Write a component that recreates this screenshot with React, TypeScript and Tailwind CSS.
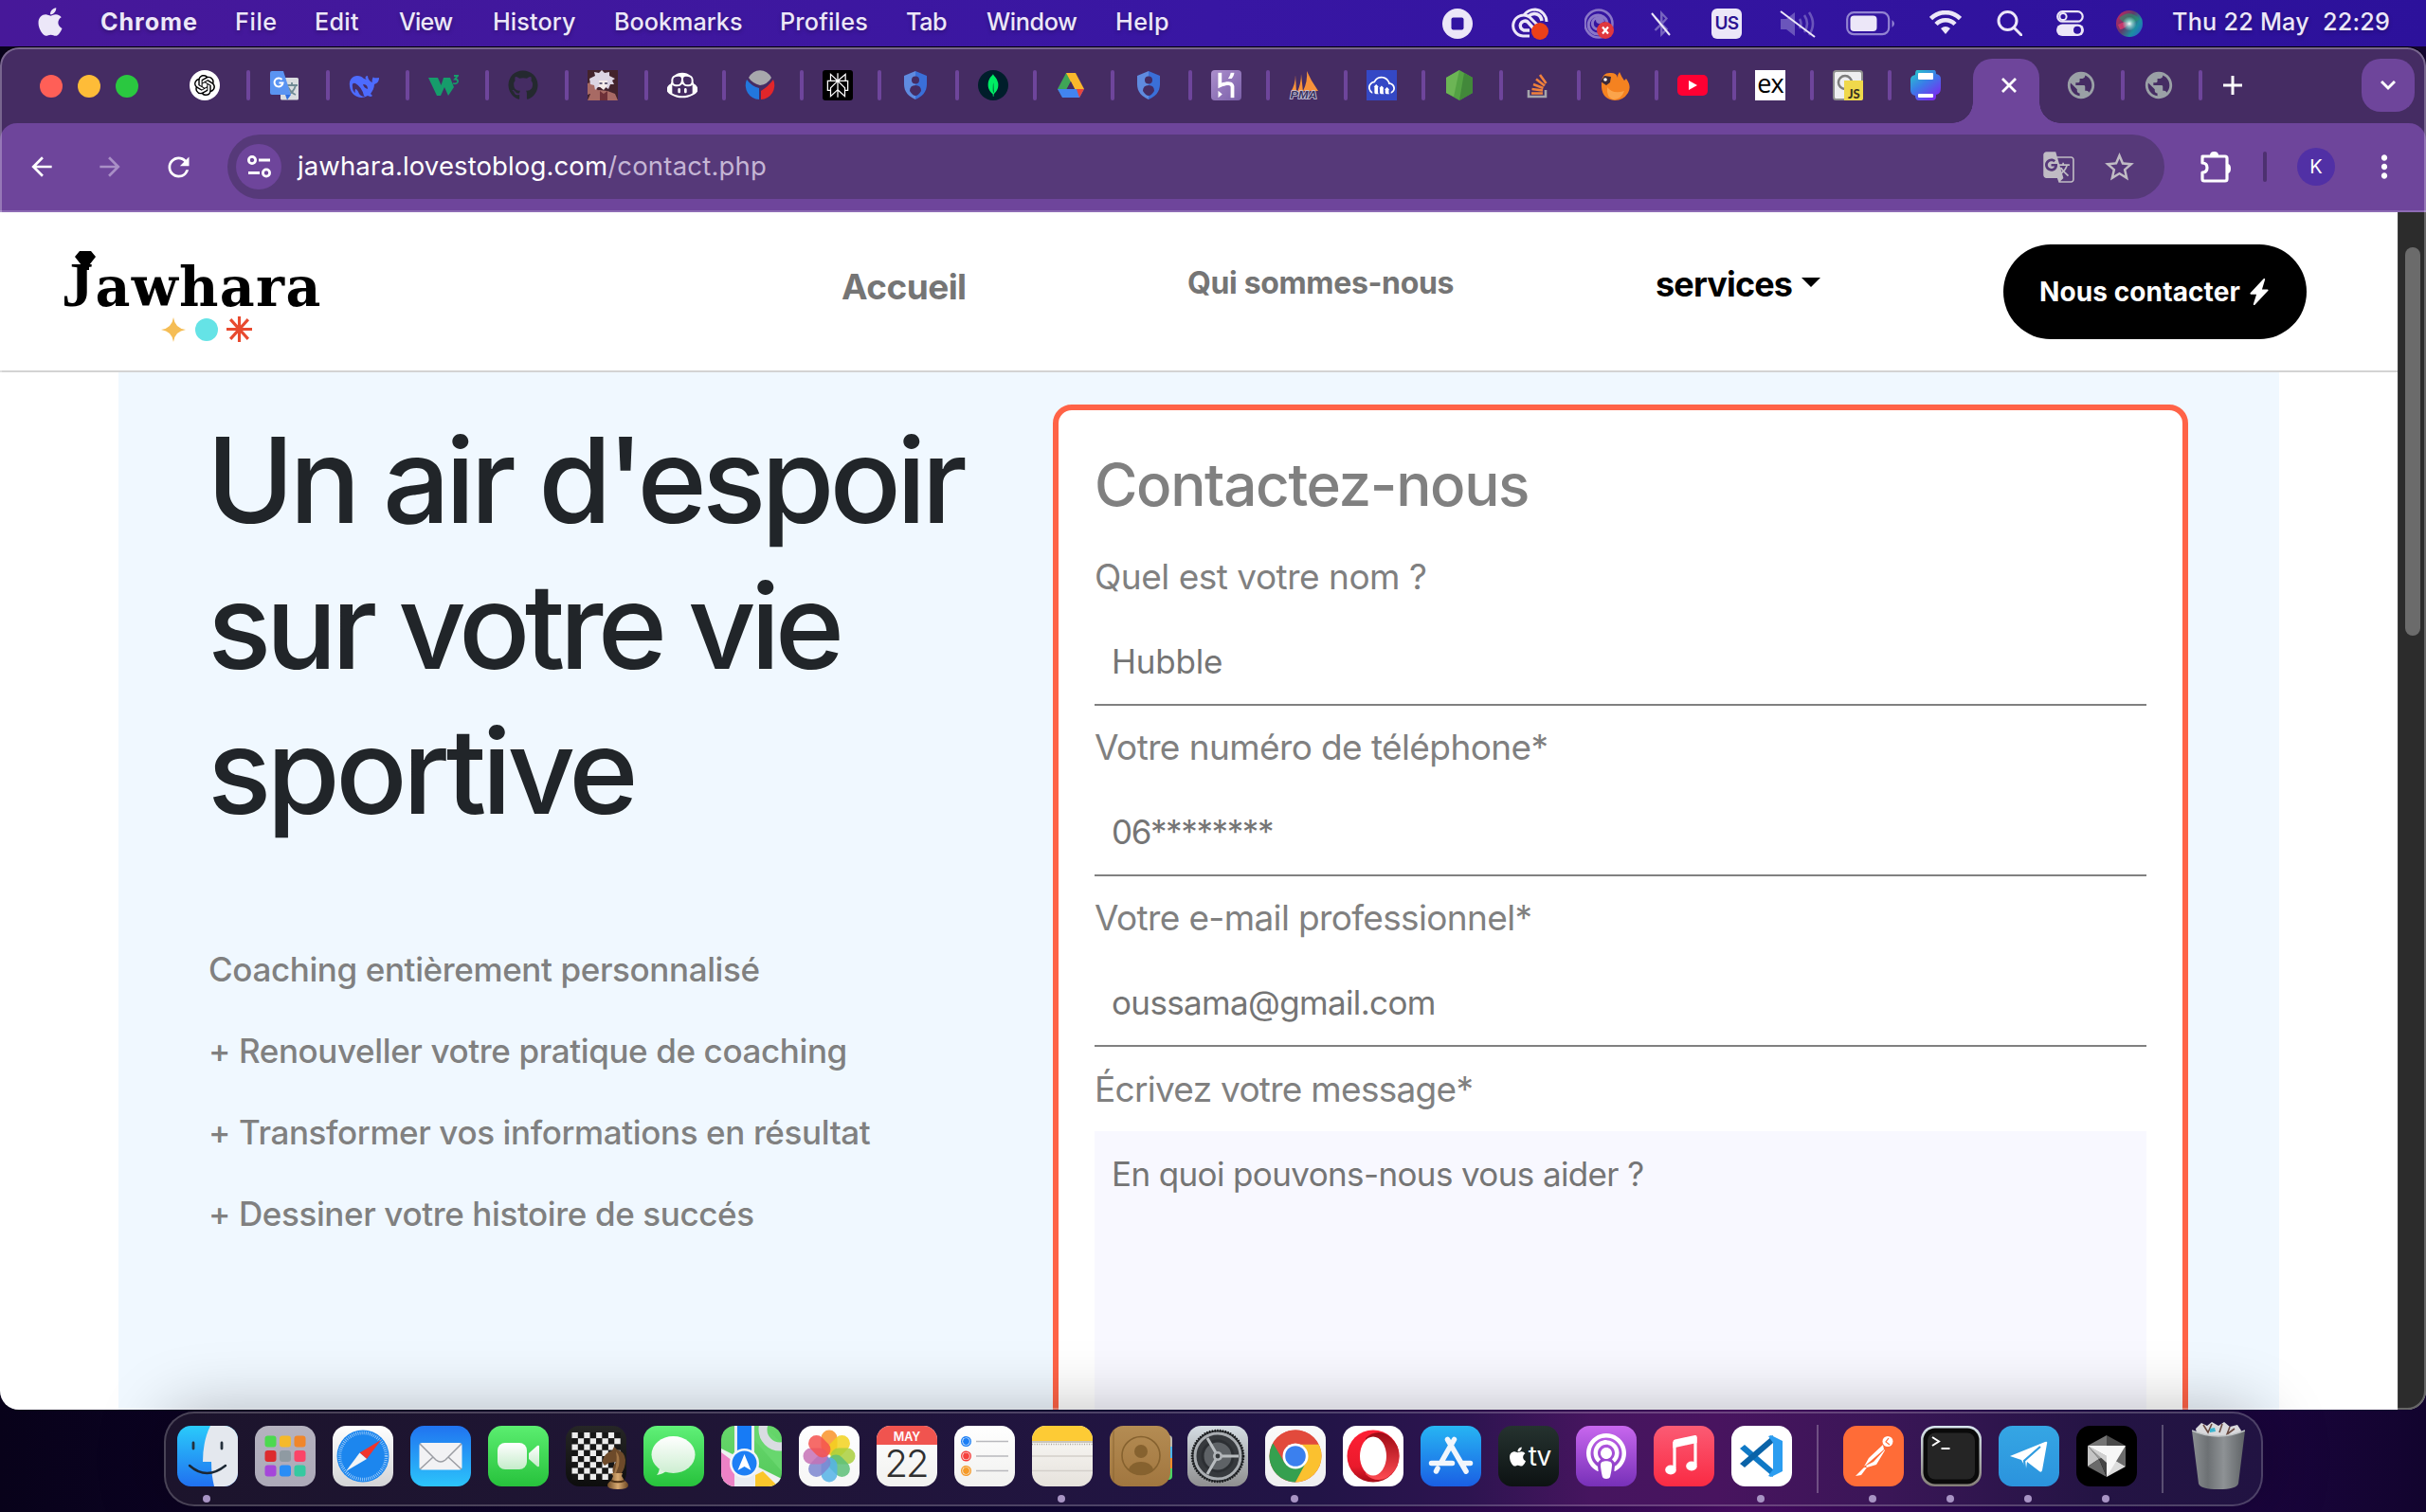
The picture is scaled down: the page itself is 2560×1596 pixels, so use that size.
import type { ReactNode } from 'react';
import { SiOpenai, SiPerplexity, SiMongodb, SiHeroku, SiGithubcopilot, SiCloudinary } from 'react-icons/si';
import { FaApple, FaGithub, FaPodcast, FaBluetoothB } from 'react-icons/fa';
import {
  MdArrowBack, MdArrowForward, MdRefresh, MdStarBorder, MdMoreVert, MdPublic, MdOutlineGTranslate,
} from 'react-icons/md';
import { BsLightningChargeFill } from 'react-icons/bs';

/* ---------- menu bar ---------- */

function MenuBar() {
  return (
    <header className="flex h-[49px] shrink-0 items-center bg-linear-to-r from-[#471899] via-[#3816a3] via-50% to-[#2c119b] text-[25.2px] font-medium leading-[46px] text-[#ece7f8]">
      <div className="flex h-[46px] items-center pb-[3px] [text-shadow:0_2px_4px_rgba(0,0,0,0.25)]">
        <div className="w-[106px] pl-[36px]">
          <FaApple className="size-[34px]" />
        </div>
        <span className="w-[142px] font-bold tracking-[0.9px]">Chrome</span>
        <span className="w-[84px] tracking-[0.6px]">File</span>
        <span className="w-[89px] tracking-[0.3px]">Edit</span>
        <span className="w-[99px] tracking-[-0.8px]">View</span>
        <span className="w-[128px] tracking-[0.1px]">History</span>
        <span className="w-[175px]">Bookmarks</span>
        <span className="w-[133px] tracking-[0.2px]">Profiles</span>
        <span className="w-[85px] tracking-[-0.4px]">Tab</span>
        <span className="w-[136px] tracking-[-0.4px]">Window</span>
        <span className="w-[345px] tracking-[0.4px]">Help</span>
      </div>
      <div className="flex h-[48px] items-center">
        <svg className="mr-[40px] size-[32px]" viewBox="0 0 32 32">
          <circle cx="16" cy="16" r="16" fill="#ece7f8" />
          <rect x="9.500" y="9.500" width="13" height="13" rx="2" fill="#3114a1" />
        </svg>
        <svg className="mr-[37px] h-[34px] w-[41px]" viewBox="0 0 41 34" fill="none">
          <path d="M14 8C17 4 21 2 26 2a13 13 0 0 1 12 13M20 30H13a11 11 0 1 1 7-20l8 8" stroke="#ece7f8" strokeWidth="3" />
          <path d="M20 24h-6a5 5 0 1 1 4-9l8 9M19 9c6-5 13-2 14 5" stroke="#ece7f8" strokeWidth="3.500" />
          <circle cx="31" cy="25" r="9" fill="#eb4019" />
        </svg>
        <svg className="mr-[38px] h-[34px] w-[32px]" viewBox="0 0 32 34" fill="none">
          <circle cx="15" cy="17" r="14.500" stroke="#8a76c8" strokeWidth="2.500" />
          <path d="M15 28a10 10 0 1 1 9-12M14 23a6 6 0 1 1 6-8" stroke="#8a76c8" strokeWidth="3" />
          <circle cx="16" cy="13" r="4" fill="#8a76c8" />
          <circle cx="22" cy="24" r="9" fill="#e0383e" />
          <path d="M19 20.500l6 7M25 20.500l-6 7" stroke="#fff" strokeWidth="2.200" />
        </svg>
        <div className="relative mr-[43px] w-[21px]">
          <FaBluetoothB className="mx-auto h-[28px] w-[20px] text-[#7765bf]" />
          <svg className="absolute -top-px left-0 h-[30px] w-[21px]" viewBox="0 0 21 30">
            <path d="M1 4L20 27" stroke="#ece7f8" strokeWidth="2" />
          </svg>
        </div>
        <div className="mr-[40px] flex h-[32px] w-[32px] items-center justify-center rounded-[6px] bg-[#ece7f8] text-[19px] font-semibold leading-none tracking-[-0.6px] text-[#2c1492]">
          US
        </div>
        <svg className="mr-[32px] h-[30px] w-[38px]" viewBox="0 0 38 30" fill="none">
          <path d="M1 10h6l9-7v25l-9-7H1z" fill="#6a55bb" />
          <path d="M21 10q3 5 0 10M26 6q6 9 0 18M31 3q8 12 0 24" stroke="#6a55bb" strokeWidth="2.600" />
          <path d="M1 2l36 27" stroke="#ece7f8" strokeWidth="2" />
        </svg>
        <svg className="mr-[36px] h-[26px] w-[52px]" viewBox="0 0 52 26" fill="none">
          <rect x="1.200" y="1.200" width="44" height="23" rx="7" stroke="#9384d2" strokeWidth="2.200" />
          <rect x="4.500" y="4.500" width="28" height="16.500" rx="4" fill="#ece7f8" />
          <path d="M48.500 9q5 4 0 8z" fill="#9384d2" />
        </svg>
        <svg className="mb-[3px] mr-[37px] h-[25px] w-[34px]" viewBox="0 0 34 25" fill="none" stroke="#ece7f8" strokeWidth="4.600">
          <path d="M1.500 8.500a22 22 0 0 1 31 0M7 14.500a14 14 0 0 1 20 0" />
          <path d="M17 25l-5-6q5-4 10 0z" fill="#ece7f8" stroke="none" />
        </svg>
        <svg className="mr-[36px] size-[27px]" viewBox="0 0 27 27" fill="none" stroke="#ece7f8" strokeWidth="3">
          <circle cx="11.500" cy="11" r="9.500" />
          <path d="M18 18l8 8" strokeLinecap="round" />
        </svg>
        <svg className="mr-[34px] h-[27px] w-[29px]" viewBox="0 0 29 27" fill="none">
          <rect x="1.200" y="1.200" width="26.500" height="10.500" rx="5.250" stroke="#ece7f8" strokeWidth="2.200" />
          <circle cx="7" cy="6.500" r="3.600" stroke="#ece7f8" strokeWidth="2" />
          <rect x="0" y="14.500" width="29" height="12.500" rx="6.250" fill="#ece7f8" />
          <circle cx="22" cy="20.700" r="4" fill="#2f139f" />
        </svg>
        <svg className="mr-[31px] size-[28px]" viewBox="0 0 28 28">
          <defs>
            <linearGradient id="siri" x1="0" y1="0.200" x2="1" y2="0.900">
              <stop offset="0" stopColor="#c02663" />
              <stop offset="0.400" stopColor="#5f3c6a" />
              <stop offset="0.700" stopColor="#1b8fa0" />
              <stop offset="1" stopColor="#2c5bd0" />
            </linearGradient>
            <radialGradient id="siriGlow">
              <stop offset="0" stopColor="#ffffff" />
              <stop offset="0.500" stopColor="#9ce8e0" stopOpacity="0.600" />
              <stop offset="1" stopColor="#9ce8e0" stopOpacity="0" />
            </radialGradient>
          </defs>
          <circle cx="14" cy="14" r="14" fill="url(#siri)" />
          <path d="M3 8Q14-2 25 9 18 14 14 14 8 14 3 8z" fill="#1fa06c" opacity="0.550" />
          <path d="M2 15q8-5 12-1-6 6-10 6z" fill="#e8386c" opacity="0.700" />
          <circle cx="14" cy="14" r="7.500" fill="url(#siriGlow)" />
        </svg>
        <span className="whitespace-pre pb-[4px] tracking-[0.24px] [text-shadow:0_2px_4px_rgba(0,0,0,0.25)]">Thu 22 May  22:29</span>
      </div>
    </header>
  );
}

/* ---------- favicons (32 x 32) ---------- */

const Shield = () => (
  <svg viewBox="0 0 32 32">
    <path d="M16 1L4 6v9c0 8 5 13 12 16z" fill="#5f8be0" />
    <path d="M16 1l12 5v9c0 8-5 13-12 16z" fill="#3a6fd8" />
    <circle cx="16" cy="10.500" r="4" fill="#452c63" />
    <path d="M10 22q0-6 6-6t6 6q-3 5-6 5t-6-5z" fill="#452c63" />
  </svg>
);

const FAVICONS: ReactNode[] = [
  <div className="flex size-8 items-center justify-center rounded-full bg-white">
    <SiOpenai className="size-[22px] text-black" />
  </div>,
  <svg viewBox="0 0 32 32">
    <rect x="12" y="8" width="19" height="23.500" rx="1.500" fill="#dadde0" />
    <path d="M18 16h12M24 13v3M28 16q-2 7-8 10M20 18q3 6 8 8" stroke="#6f8a94" strokeWidth="1.800" fill="none" />
    <path d="M17 26h6l-4 5.500z" fill="#2f6fe0" />
    <path d="M3 1h12l8 25H3a2 2 0 0 1-2-2V3a2 2 0 0 1 2-2z" fill="#5a94f2" />
    <path d="M13.500 10a4.500 4.500 0 1 0 1 3.500h-4" stroke="#fff" strokeWidth="2" fill="none" />
  </svg>,
  <svg viewBox="0 0 32 32">
    <path
      d="M1 17C0 10 4 6 9 6c3 0 5 1 7 3l3 1c-2-1-2-4 1-4 0 3 2 6 5 7-1-2 0-4 1-6 0 2 3 1 6 1 0 4-2 6-5 7 0 4-2 7-4 10l2 2c-2 2-4 0-5 0C12 32 2 27 1 17z"
      fill="#4d6bfe"
    />
    <path d="M4 18q-1-5 3-4 7 4 9 13l1 1q-4 0-6-3-2-5-4-5-1 2 0 4-3-2-3-6z" fill="#452c63" />
    <path d="M15 15q5 0 5 5-4-1-5-5z" fill="#452c63" />
  </svg>,
  <svg viewBox="0 0 32 32" fill="none">
    <path d="M0 8h10l3.500 8L16 8h7l4 10-6 9-4-9-4 9H9z" fill="#169c6b" />
    <path d="M27 6h4l-3 3.500q3.500 0 3 3-1 2.500-5 1.500" stroke="#169c6b" strokeWidth="1.800" />
  </svg>,
  <FaGithub className="size-8 text-[#24292f]" />,
  <svg viewBox="0 0 32 32">
    <rect width="32" height="32" fill="#43232c" />
    <path d="M0 14l6-2 5 10-11 4zM0 32l4-9 8-2 9 1 8 3 3 7z" fill="#a86a64" />
    <path d="M2 9l6-3-1-4 5 1 3-3 3 3 5-1 0 4 6 3-3 2 2 4-4 0-2 5-3-2-8 0-3 3-1-5-4-1z" fill="#dcd4e2" />
    <path d="M12 11l9 0 0 5-4 5-5-4z" fill="#f5ece9" />
    <path d="M12.500 14h3M18 14h3" stroke="#3c3757" strokeWidth="1.600" />
    <path d="M13 22l4 3 4-3 0 10h-8z" fill="#6e3038" />
  </svg>,
  <SiGithubcopilot className="size-8 text-white" />,
  <svg viewBox="0 0 32 32">
    <path d="M4 8A14 16 0 0 1 28 8q-4 7-12 8Q8 14 4 8z" fill="#a8a8ac" />
    <path d="M2 10q5 7 13 9v12A15 15 0 0 1 2 10z" fill="#2277dd" />
    <path d="M30 10a15 15 0 0 1-13 21v-9q8-5 13-12z" fill="#e2262a" />
  </svg>,
  <div className="flex size-8 items-center justify-center rounded-[3px] bg-black">
    <SiPerplexity className="size-[26px] text-white" />
  </div>,
  <Shield />,
  <div className="flex size-8 items-center justify-center rounded-full bg-[#001e2b]">
    <SiMongodb className="size-[24px] text-[#00ed64]" />
  </div>,
  <svg viewBox="0 0 32 32">
    <path d="M11 3h10L7 28 2 20z" fill="#3fa557" />
    <path d="M11 3h10l-5 9z" fill="#1f8a43" />
    <path d="M11 3h10l9 17H20z" fill="#f9b72c" />
    <path d="M2 20h28l-5 9H7z" fill="#4284f0" />
    <path d="M22 20h8l-5 9z" fill="#e8453c" />
    <path d="M16 12l4 8h-8z" fill="#452c63" />
  </svg>,
  <Shield />,
  <div className="flex size-8 items-center justify-center rounded-[4px] bg-linear-to-br from-[#ac8fcd] to-[#7a5fa8]">
    <SiHeroku className="size-[38px] shrink-0 text-white [clip-path:inset(14%)]" />
  </div>,
  <svg viewBox="0 0 32 32">
    <path d="M19 1l5 10 7 11H15q5-10 4-21zM7 5l1 18H2q5-8 5-18zM13 4l2 19H9q4-9 4-19z" fill="#f7923a" />
    <text x="1.500" y="30" fontFamily="Liberation Sans" fontWeight="700" fontStyle="italic" fontSize="11.500" textLength="28" lengthAdjust="spacingAndGlyphs" fill="#3a3560" stroke="#c9c5dc" strokeWidth="1.600" paintOrder="stroke">
      PMA
    </text>
  </svg>,
  <div className="flex size-8 items-center justify-center bg-[#3448c5]">
    <SiCloudinary className="size-[28px] text-white" />
  </div>,
  <svg viewBox="0 0 32 32">
    <path d="M16 0l14 8v16l-14 8L2 24V8z" fill="#54a244" />
    <path d="M16 0L2 8v16l8 4z" fill="#6cb555" />
    <path d="M21 3l9 5v16l-14 8z" fill="#42883a" />
  </svg>,
  <svg viewBox="0 0 32 32" fill="none">
    <path d="M7 21v7h18v-7" stroke="#a5a5ab" strokeWidth="2.600" />
    <path d="M10 24.500h12M10.500 20l11.500 1.500M12 15l10.500 4M15 9.500l9 7M19 5l6.500 9" stroke="#f0803c" strokeWidth="2.600" />
  </svg>,
  <svg viewBox="0 0 32 32">
    <path d="M2 12Q3 2 12 3q6 0 7 5 0-4 2-6 2 5 5 9l2-2q6 8 2 15-5 8-14 8Q3 31 2 18z" fill="#f58220" />
    <path d="M8 18q6 8 18 4-3 9-12 9-7-2-6-13z" fill="#fba44b" />
    <path d="M1 12l4-6 7 1-1 6-4 3z" fill="#3b2a3a" />
    <circle cx="6" cy="10" r="1.800" fill="#fff" />
  </svg>,
  <div className="flex h-[22px] w-8 items-center justify-center rounded-[5px] bg-[#ff0033]">
    <svg className="h-[10px] w-[9px]" viewBox="0 0 9 10">
      <path d="M0 0l9 5-9 5z" fill="#fff" />
    </svg>
  </div>,
  <div className="flex size-8 items-center justify-center bg-white font-['Open_Sans'] text-[27px] leading-none tracking-[-1px] text-black">
    <span className="pb-[5px]">ex</span>
  </div>,
  <svg viewBox="0 0 32 32">
    <rect x="1" y="1" width="30" height="30" rx="2.500" fill="#eeeef0" stroke="#8f8f8f" strokeWidth="2" />
    <circle cx="13" cy="13" r="7" fill="none" stroke="#7d7d7d" strokeWidth="2.500" />
    <path d="M12 11h20v19a2 2 0 0 1-2 2H12z" fill="#efd84b" />
    <text x="16" y="30" fontFamily="Lato" fontWeight="900" fontSize="13" fill="#3a3420">
      JS
    </text>
  </svg>,
  <svg viewBox="0 0 32 32">
    <defs>
      <linearGradient id="print" x1="0" y1="0" x2="0.700" y2="1">
        <stop offset="0" stopColor="#25d0c8" />
        <stop offset="0.500" stopColor="#3a7ce8" />
        <stop offset="1" stopColor="#7a2cf0" />
      </linearGradient>
    </defs>
    <path d="M7 0h18q2 0 2 4 5 1 5 5v10q0 6-5 7v2q0 4-4 4H9q-4 0-4-5-5-1-5-6V10q0-4 5-5 0-5 2-5z" fill="url(#print)" />
    <rect x="8" y="3" width="16" height="7" rx="1" fill="#fff" />
    <rect x="8" y="25" width="16" height="4" rx="1" fill="#fff" />
  </svg>,
];

function BrowserTab({ children, wide = false, last = false }: { children: ReactNode; wide?: boolean; last?: boolean }) {
  return (
    <div className={wide ? 'flex w-[84px] items-center justify-between pl-5' : 'flex w-[82px] items-center justify-between pl-5'}>
      <div className="flex size-8 items-center justify-center">{children}</div>
      {!last && <div className="h-8 w-1 rounded-sm bg-[#6e459b]" />}
    </div>
  );
}

function TabStrip() {
  return (
    <div className="flex h-[80px] shrink-0 items-center bg-[#452c63] pl-[42px]">
      <div className="mr-[34px] flex gap-4 pt-[2px]">
        <div className="size-6 rounded-full bg-[#ff5f57]" />
        <div className="size-6 rounded-full bg-[#febc38]" />
        <div className="size-6 rounded-full bg-[#2ac840]" />
      </div>
      {FAVICONS.map((icon, i) => (
        <BrowserTab key={i} wide={i < 6} last={i === FAVICONS.length - 1}>
          {icon}
        </BrowserTab>
      ))}
      <div className="relative ml-1 mt-3 flex h-[68px] w-[70px] items-center justify-center rounded-t-[20px] bg-[#6e459b] pb-[24px] pl-[6px]">
        <div className="absolute bottom-0 left-[-22px] size-[22px] bg-[radial-gradient(circle_at_0_0,transparent_21.5px,#6e459b_22px)]" />
        <div className="absolute bottom-0 right-[-22px] size-[22px] bg-[radial-gradient(circle_at_100%_0,transparent_21.5px,#6e459b_22px)]" />
        <svg className="mt-[12px] size-[16px]" viewBox="0 0 16 16" stroke="#fff" strokeWidth="2.800">
          <path d="M1 1l14 14M15 1L1 15" />
        </svg>
      </div>
      <div className="ml-2 flex">
        <BrowserTab>
          <MdPublic className="size-[34px] shrink-0 text-[#9aa0a6]" />
        </BrowserTab>
        <BrowserTab>
          <MdPublic className="size-[34px] shrink-0 text-[#9aa0a6]" />
        </BrowserTab>
      </div>
      <svg className="ml-[22px] size-[20px]" viewBox="0 0 20 20" stroke="#fff" strokeWidth="3">
        <path d="M10 0v20M0 10h20" />
      </svg>
      <div className="ml-[126px] flex h-[56px] w-[56px] items-center justify-center rounded-[20px] bg-[#6e459b]">
        <svg className="size-[16px]" viewBox="0 0 16 16" fill="none" stroke="#fff" strokeWidth="3">
          <path d="M1 4l7 7 7-7" />
        </svg>
      </div>
    </div>
  );
}

function Toolbar() {
  return (
    <div className="shrink-0 bg-[#452c63]">
      <div className="flex h-[94px] items-center rounded-t-[18px] border-b-2 border-[#8d6bb4] bg-[#6e459b] pl-[28px] text-white">
        <MdArrowBack className="mr-[40px] size-[32px]" />
        <MdArrowForward className="mr-[40px] size-[32px] text-[#a98fc6]" />
        <MdRefresh className="mr-[35px] size-[33px]" />
        <div className="flex h-[68px] w-[2044px] items-center rounded-full bg-[#563979] pl-[9px] pr-[29px]">
          <div className="flex size-[48px] items-center justify-center rounded-full bg-[#6e459b]">
            <svg className="h-[24px] w-[25px]" viewBox="0 0 25 24" fill="none" stroke="#fff" strokeWidth="2.800">
              <circle cx="5" cy="5" r="3.600" />
              <path d="M12 5h12M1 18.500h12" />
              <circle cx="20" cy="18.500" r="3.600" />
            </svg>
          </div>
          <span className="ml-[17px] text-[27.5px] leading-none tracking-[0.12px] text-white">jawhara.lovestoblog.com</span>
          <span className="text-[27.5px] leading-none tracking-[0.2px] text-[#c5b6d5]">/contact.php</span>
          <MdOutlineGTranslate className="ml-auto mr-[26px] size-[39px] text-[#c0bcc4]" />
          <MdStarBorder className="size-[37px] text-[#c0bcc4]" />
        </div>
        <svg className="ml-[37px] h-[34px] w-[34px]" viewBox="0 0 34 34" fill="none" stroke="#fff" strokeWidth="3.200" strokeLinejoin="round">
          <path d="M3 6h24q2 0 2 2v22q0 2-2 2H5q-2 0-2-2v-7q5 0 5-5t-5-5V8q0-2 2-2z" />
          <path d="M11 5q0-4 4.500-4T20 5zM30 14q3 .5 3 5t-3 5z" fill="#fff" stroke="none" />
        </svg>
        <div className="ml-[33px] h-8 w-[4px] rounded-sm bg-[#4d3070]" />
        <div className="ml-[32px] flex size-[40px] items-center justify-center rounded-full bg-[#5130a5] text-[20px]">K</div>
        <MdMoreVert className="ml-[33px] size-[38px]" />
      </div>
    </div>
  );
}

/* ---------- web page ---------- */

function SiteLogo() {
  return (
    <div className="relative ml-[65px] mt-[46px] h-[110px] w-[275px] whitespace-nowrap font-['Liberation_Serif'] text-[67px] font-bold leading-[60px] text-black">
      <div className="h-[60px]">
        J
        <span className="ml-[2px] font-['DejaVu_Serif'] text-[57px] leading-none tracking-[1.3px]">awhara</span>
      </div>
      <svg className="absolute left-[14px] top-[-5px] h-[20px] w-[22px]" viewBox="0 0 22 20">
        <path d="M5 0h12l5 6-7 9v5H7v-5L0 6z" fill="#000" />
      </svg>
      <div className="mt-[4px] flex items-center pl-[105px]">
        <svg className="size-[26px]" viewBox="0 0 26 26">
          <path d="M13 0q1.500 11.500 13 13-11.500 1.500-13 13-1.500-11.500-13-13 11.500-1.500 13-13z" fill="#f5bd55" />
        </svg>
        <div className="ml-[10px] size-[24px] rounded-full bg-[#65e3e6]" />
        <svg className="ml-[9px] size-[27px]" viewBox="0 0 26 26" stroke="#e84a2f" strokeWidth="3">
          <path d="M13 0v26M0 13h26M4 3l18 20M22 3L4 23" />
        </svg>
      </div>
    </div>
  );
}

function SiteNav() {
  return (
    <nav className="flex h-[169px] shrink-0 items-start border-b-2 border-[#d3d3d3] bg-white font-bold">
      <SiteLogo />
      <a className="ml-[548px] mt-[51px] w-[365px] text-[37px] leading-[56px] tracking-[-0.55px] text-[#757575]">Accueil</a>
      <a className="mt-[51px] w-[494px] text-[32px] leading-[48px] tracking-[-0.35px] text-[#757575]">Qui sommes-nous</a>
      <a className="mt-[50px] flex w-[367px] items-center text-[36px] leading-[52px] tracking-[-0.85px] text-black">
        services
        <svg className="ml-[10px] mt-[-5px] h-[10px] w-[20px]" viewBox="0 0 20 10">
          <path d="M0 0h20L10 10z" />
        </svg>
      </a>
      <a className="mt-[34px] flex h-[100px] w-[320px] items-center rounded-[50px] bg-black pl-[38px] text-[28px] tracking-[0.1px] text-white">
        Nous contacter
        <BsLightningChargeFill className="ml-[6px] size-[28px]" />
      </a>
    </nav>
  );
}

const BENEFITS = [
  'Coaching entièrement personnalisé',
  '+ Renouveller votre pratique de coaching',
  '+ Transformer vos informations en résultat',
  '+ Dessiner votre histoire de succés',
];

const FIELDS = [
  { label: 'Quel est votre nom ?', hint: 'Hubble', labelClass: 'tracking-[-0.49px]', hintClass: 'tracking-[-0.2px]' },
  { label: 'Votre numéro de téléphone*', hint: '06********', labelClass: 'tracking-[-0.6px]', hintClass: 'tracking-[-1.4px]' },
  { label: 'Votre e-mail professionnel*', hint: 'oussama@gmail.com', labelClass: 'tracking-[-0.64px]', hintClass: 'tracking-[-0.65px]' },
];

function ContactForm() {
  return (
    <form className="mt-[34px] h-[1200px] w-[1198px] rounded-[20px] border-[6px] border-[#ff6347] bg-white px-[38px] pt-[41px]">
      <h2 className="mb-[31px] text-[62px] font-medium leading-[76px] tracking-[-1.37px] text-[#808080]">Contactez-nous</h2>
      {FIELDS.map((f) => (
        <div key={f.label} className="mb-[16px] text-[37px] leading-[56px] text-[#808080]">
          <div className={f.labelClass}>{f.label}</div>
          <div className="mt-[15px] h-[93px] border-b-2 border-[#808080] px-[18px] text-[35px] leading-[92px] text-[#757575]">
            <span className={f.hintClass}>{f.hint}</span>
          </div>
        </div>
      ))}
      <div className="pt-px text-[37px] leading-[56px] tracking-[-0.72px] text-[#808080]">Écrivez votre message*</div>
      <div className="mt-[16px] h-[400px] bg-[#f8f8ff] px-[18px] pt-[18px] text-[35px] leading-[54px] tracking-[-0.62px] text-[#757575]">
        En quoi pouvons-nous vous aider ?
      </div>
    </form>
  );
}

function Page() {
  return (
    <div className="flex min-h-0 flex-1 bg-white">
      <div className="flex w-[2530px] flex-col overflow-hidden">
        <SiteNav />
        <main className="ml-[125px] flex h-[1095px] w-[2280px] overflow-hidden bg-[#f0f8ff]">
          <section className="w-[986px] pl-[95px]">
            <h1 className="mt-[37px] whitespace-nowrap text-[125px] font-medium leading-[153.6px] text-[#212529]">
              <span className="-ml-[2px] block tracking-[-5px]">Un air d'espoir</span>
              <span className="-ml-[1px] block tracking-[-5.75px]">sur votre vie</span>
              <span className="-ml-[1px] block tracking-[-4.7px]">sportive</span>
            </h1>
            <ul className="mt-[105px] flex flex-col gap-8 whitespace-nowrap text-[35px] font-medium leading-[54px] tracking-[-0.38px] text-[#808080]">
              {BENEFITS.map((b) => (
                <li key={b}>{b}</li>
              ))}
            </ul>
          </section>
          <ContactForm />
        </main>
      </div>
      <div className="w-[30px] border-l border-[#3d3d3d] bg-[#2c2c2c] pl-[7px] pt-[37px]">
        <div className="h-[410px] w-[16px] rounded-full bg-[#6b6b6b]" />
      </div>
    </div>
  );
}

/* ---------- dock ---------- */

const PETALS = [
  ['#f9932a', 0], ['#f2d21f', 45], ['#a9cf3c', 90], ['#5dbf78', 135],
  ['#55b3e6', 180], ['#7d86d0', 225], ['#c571b5', 270], ['#f4524f', 315],
] as const;

const LAUNCH = ['#4cd94f', '#f5b92b', '#f0862b', '#dd2b2e', '#8f9aa2', '#fb4468', '#a546da', '#2a8df5', '#35c9a0'];

const Tile = ({ id, from, to, children }: { id: string; from: string; to: string; children?: ReactNode }) => (
  <svg className="size-16" viewBox="0 0 64 64">
    <defs>
      <linearGradient id={id} x1="0" y1="0" x2="0" y2="1">
        <stop offset="0" stopColor={from} />
        <stop offset="1" stopColor={to} />
      </linearGradient>
      <clipPath id={`${id}-clip`}>
        <rect width="64" height="64" rx="14.500" />
      </clipPath>
    </defs>
    <g clipPath={`url(#${id}-clip)`}>
      <rect width="64" height="64" fill={`url(#${id})`} />
      {children}
    </g>
  </svg>
);

const DOCK_MAIN: { icon: ReactNode; running?: boolean }[] = [
  {
    running: true,
    icon: (
      <Tile id="finder" from="#2acbfb" to="#2070f0">
        <path d="M35 0h29v64H39q-3-12-3-26h-9q0-22 8-38z" fill="#e4e8ee" />
        <path d="M17 18v6M47 18v6" stroke="#24303c" strokeWidth="2.800" strokeLinecap="round" />
        <path d="M13 42q18 16 38 0" stroke="#1b2733" strokeWidth="2.400" fill="none" strokeLinecap="round" />
      </Tile>
    ),
  },
  {
    icon: (
      <Tile id="launch" from="#b5b2bf" to="#aca9b8">
        {LAUNCH.map((c, i) => (
          <rect key={i} x={10.500 + (i % 3) * 15.500} y={10.500 + Math.floor(i / 3) * 15.500} width="12" height="12" rx="3" fill={c} />
        ))}
      </Tile>
    ),
  },
  {
    icon: (
      <Tile id="safari" from="#ffffff" to="#d4d4d6">
        <circle cx="32" cy="32" r="27.500" fill="#1c86ee" />
        <circle cx="32" cy="32" r="24.500" fill="none" stroke="#b9dafa" strokeWidth="3.500" strokeDasharray="0.700 1.440" />
        <path d="M51 15L36 35 28.500 28.500z" fill="#f0352c" />
        <path d="M14 48l14.500-19.500L36 35z" fill="#f2f4f6" />
      </Tile>
    ),
  },
  {
    icon: (
      <Tile id="mail" from="#2073f0" to="#2cc4fb">
        <rect x="9.500" y="18" width="45" height="28.500" rx="3" fill="#f2f2f4" />
        <path d="M10 19l17 17q5 4 10 0l17-17M10 46l14-13M54 46L40 33" stroke="#9b9da3" strokeWidth="1.500" fill="none" />
      </Tile>
    ),
  },
  {
    icon: (
      <Tile id="facetime" from="#5bee70" to="#27c23c">
        <defs>
          <linearGradient id="camera" x1="0" y1="0" x2="0" y2="1">
            <stop offset="0" stopColor="#ffffff" />
            <stop offset="1" stopColor="#c5ecca" />
          </linearGradient>
        </defs>
        <rect x="10" y="18" width="31" height="28" rx="8" fill="url(#camera)" />
        <path d="M43 29l9-8q2-1 2 1v20q0 2-2 1l-9-8z" fill="url(#camera)" />
      </Tile>
    ),
  },
  {
    icon: (
      <div className="relative">
        <Tile id="chess" from="#262626" to="#0d0d0d">
          {Array.from({ length: 64 }, (_, i) => (
            <rect
              key={i}
              x={6.500 + (i % 8) * 6.400}
              y={7 + Math.floor(i / 8) * 6.250}
              width="6.400"
              height="6.250"
              fill={(i + Math.floor(i / 8)) % 2 ? '#161616' : '#ececec'}
            />
          ))}
        </Tile>
        <svg className="absolute left-[37px] top-[22px] h-[46px] w-[31px]" viewBox="0 0 31 46">
          <defs>
            <linearGradient id="brass" x1="0" y1="0" x2="1" y2="0">
              <stop offset="0" stopColor="#6f4a26" />
              <stop offset="0.500" stopColor="#d9ab72" />
              <stop offset="1" stopColor="#6b4522" />
            </linearGradient>
          </defs>
          <path d="M2 14q2-7 10-10l2-4 3 3q8 2 9 11 0 8-4 14h-9q-2-6 3-12l-7 1-5 3q-3-3-2-6z" fill="#6d4a2a" />
          <path d="M16 5q5 5 3 15l-3 8h-2q4-12 2-23z" fill="#a17546" />
          <path d="M11 28h12l-1 3 3 5q4 2 4 5 0 4-11 4T7 41q0-3 4-5l2-5z" fill="url(#brass)" />
          <path d="M11 36q7 2.500 14 0" stroke="#4d3116" strokeWidth="2" fill="none" />
        </svg>
      </div>
    ),
  },
  {
    icon: (
      <Tile id="messages" from="#60f078" to="#27c23c">
        <defs>
          <linearGradient id="bubble" x1="0" y1="0" x2="0" y2="1">
            <stop offset="0" stopColor="#ffffff" />
            <stop offset="1" stopColor="#cdeed1" />
          </linearGradient>
        </defs>
        <path d="M17 42q0 7-3 10 7-1 11-5z" fill="#dcf4df" />
        <ellipse cx="31.500" cy="30.500" rx="23" ry="19.500" fill="url(#bubble)" />
      </Tile>
    ),
  },
  {
    icon: (
      <Tile id="maps" from="#67d76b" to="#54c95c">
        <path d="M0 24l64 32v8H0z" fill="#eef0f2" />
        <path d="M0 28l16 12v24H0z" fill="#ec82c6" />
        <path d="M36 64V52l8-4 16 16z" fill="#fbc62c" />
        <path d="M34 14l30 34V18L44 0H32z" fill="#68d76e" />
        <circle cx="62" cy="4" r="18" fill="none" stroke="#d9dce2" strokeWidth="9" />
        <rect x="14" y="0" width="21" height="64" fill="#e9ecf2" />
        <rect x="17" y="0" width="15" height="36" fill="#177bf5" />
        <circle cx="24.500" cy="39.500" r="15.500" fill="#f4f6f8" />
        <circle cx="24.500" cy="39.500" r="13" fill="#1d7ff5" />
        <path d="M24.500 30l7 17-7-4-7 4z" fill="#fff" />
      </Tile>
    ),
  },
  {
    icon: (
      <Tile id="photos" from="#ffffff" to="#f6f6f6">
        {PETALS.map(([c, a]) => (
          <rect key={a} x="23.500" y="4.500" width="17" height="26" rx="8.500" fill={c} opacity="0.850" transform={`rotate(${a} 32 32)`} />
        ))}
      </Tile>
    ),
  },
  {
    icon: (
      <Tile id="calendar" from="#ffffff" to="#f1f1ef">
        <rect width="64" height="20" fill="#f0544f" />
        <text x="32" y="15.700" textAnchor="middle" fontFamily="Inter" fontWeight="600" fontSize="12.500" fill="#fff">
          MAY
        </text>
        <text x="31" y="54" textAnchor="middle" fontFamily="Inter" fontWeight="300" fontSize="40" letterSpacing="-2" fill="#303030">
          22
        </text>
      </Tile>
    ),
  },
  {
    icon: (
      <Tile id="reminders" from="#ffffff" to="#f1f1ef">
        {['#1a7ef5', '#f53f3c', '#f59a28'].map((c, i) => (
          <g key={c}>
            <circle cx="12.500" cy={16.500 + i * 15.500} r="4.800" fill="none" stroke={c} strokeWidth="1.400" />
            <circle cx="12.500" cy={16.500 + i * 15.500} r="3.400" fill={c} />
            <path d={`M23 ${16.500 + i * 15.500}h34`} stroke="#b9b9bd" strokeWidth="1.400" />
          </g>
        ))}
      </Tile>
    ),
  },
  {
    running: true,
    icon: (
      <Tile id="notes" from="#fbfaf8" to="#e6e2dc">
        <rect width="64" height="16" fill="#fdcb35" />
        <path d="M0 17h64" stroke="#c9c5bd" strokeWidth="2" />
        <path d="M0 19.500h64" stroke="#a9a59d" strokeWidth="1.400" strokeDasharray="1 1.500" />
        <path d="M0 32h64M0 47.500h64" stroke="#d3cfca" strokeWidth="1.400" />
      </Tile>
    ),
  },
  {
    icon: (
      <div className="relative">
        <div className="absolute right-[-2px] top-[10px] flex flex-col overflow-hidden rounded-r-[4px]">
          <div className="h-[12px] w-2 bg-[#bfb7ab]" />
          <div className="h-[12px] w-2 bg-[#4ab4f0]" />
          <div className="h-[11px] w-2 bg-[#f38a2c]" />
          <div className="h-[12px] w-2 bg-[#4bd263]" />
        </div>
        <div className="relative">
          <Tile id="contacts" from="#b48c53" to="#a1763f">
            <path d="M4 0v64" stroke="#8c6632" strokeWidth="1" />
            <circle cx="33" cy="31.500" r="20" fill="none" stroke="#86622f" strokeWidth="1.600" />
            <circle cx="33" cy="27" r="7" fill="#86622f" />
            <path d="M20 46q3-8 13-8t13 8q-6 5.500-13 5.500T20 46z" fill="#86622f" />
          </Tile>
        </div>
      </div>
    ),
  },
  {
    icon: (
      <Tile id="settings" from="#d5dde3" to="#8f8f90">
        <circle cx="32" cy="32" r="27.500" fill="#36393d" />
        <circle cx="32" cy="32" r="24" fill="none" stroke="#a9adb1" strokeWidth="3" />
        <circle cx="32" cy="32" r="27" fill="none" stroke="#16181a" strokeWidth="2.600" strokeDasharray="1.400 1.400" />
        <circle cx="32" cy="32" r="17" fill="#5e6266" />
        <circle cx="32" cy="32" r="16" fill="none" stroke="#2c2f33" strokeWidth="3" />
        <path d="M32 32h22M32 32L21 13M32 32L21 51" stroke="#b9bdc0" strokeWidth="3" />
        <circle cx="32" cy="32" r="5" fill="#b0b4b8" />
        <circle cx="32" cy="32" r="2.400" fill="#33373a" />
      </Tile>
    ),
  },
  {
    running: true,
    icon: (
      <Tile id="chrome" from="#fafafa" to="#eeeef0">
        <circle cx="32" cy="32" r="27.500" fill="#e24a3c" />
        <path d="M32 32L8.200 18.200A27.500 27.500 0 0 0 32 59.500L43.900 38.900z" fill="#35a04f" />
        <path d="M32 19.500h24.500A27.500 27.500 0 0 1 32 59.500L43.500 38z" fill="#fbc12f" />
        <path d="M8.200 18.200l12.500 21 11.300-19.700h24.500A27.500 27.500 0 0 0 8.200 18.200z" fill="#e24a3c" />
        <circle cx="32" cy="32" r="13.500" fill="#fff" />
        <circle cx="32" cy="32" r="10.800" fill="#3b80ee" />
      </Tile>
    ),
  },
  {
    icon: (
      <Tile id="opera" from="#ffffff" to="#ffffff">
        <defs>
          <linearGradient id="ringLeft" x1="0" y1="0" x2="0" y2="1">
            <stop offset="0" stopColor="#ff1f34" />
            <stop offset="0.700" stopColor="#ea1a2c" />
            <stop offset="1" stopColor="#a50d18" />
          </linearGradient>
          <linearGradient id="ringRight" x1="0" y1="0" x2="0" y2="1">
            <stop offset="0" stopColor="#9e0a14" />
            <stop offset="1" stopColor="#ff4b52" />
          </linearGradient>
        </defs>
        <circle cx="32" cy="32" r="27.500" fill="url(#ringLeft)" />
        <path d="M24 13q6-6 14-6 8 0 14 7 7.500 7 7.500 18T52 50q-6 7-14 7-8 0-14-6z" fill="url(#ringRight)" />
        <ellipse cx="32" cy="32" rx="14" ry="20.500" fill="#fff" />
      </Tile>
    ),
  },
  {
    icon: (
      <Tile id="appstore" from="#27b5f3" to="#1a5fe4">
        <path
          d="M35.500 14.500L21.500 39M16.500 48l1.500-3M28.500 14.500L48 48M11.500 39.500h22M43 39.500h9.500"
          fill="none"
          stroke="#f1f6fc"
          strokeWidth="5.500"
          strokeLinecap="round"
        />
      </Tile>
    ),
  },
  {
    icon: (
      <div className="relative">
        <Tile id="appletv" from="#25322f" to="#0d1213" />
        <div className="absolute inset-0 flex items-center justify-center text-[28px] leading-none tracking-[-1px] text-white">
          <FaApple className="size-[23px]" />
          <span className="-mt-px">tv</span>
        </div>
      </div>
    ),
  },
  {
    icon: (
      <div className="relative">
        <Tile id="podcasts" from="#c867ee" to="#7730b8" />
        <FaPodcast className="absolute left-[8px] top-[8px] size-[48px] text-white" />
      </div>
    ),
  },
  {
    icon: (
      <Tile id="music" from="#fb5b74" to="#fa2a43">
        <path d="M22 17v28M44 12v29" stroke="#fff" strokeWidth="3.200" />
        <path d="M20.400 17q0-2 2-2.500l21-4.500q2.200-.5 2.200 1.500v6.500l-25.200 5.500z" fill="#fff" />
        <ellipse cx="18" cy="46.500" rx="5.800" ry="5" fill="#fff" />
        <ellipse cx="40" cy="42.500" rx="5.800" ry="5" fill="#fff" />
      </Tile>
    ),
  },
  {
    running: true,
    icon: (
      <Tile id="vscode" from="#ffffff" to="#ffffff">
        <path d="M9 24l5-4 30 26v8z" fill="#1079c6" />
        <path d="M9 40l5 4 30-26v-8z" fill="#0a63a8" />
        <path d="M42 10l12 6v32l-12 6-3-1 5-7V18l-5-7z" fill="#2b9df0" />
      </Tile>
    ),
  },
];

const DOCK_RECENT: { icon: ReactNode; running?: boolean }[] = [
  {
    running: true,
    icon: (
      <Tile id="postman" from="#ff6c37" to="#ff6c37">
        <circle cx="47" cy="16.500" r="5.500" fill="#fff" />
        <path d="M42 20L27 34l-5 9 6-5 15-13zM44 25L32 38l-8 4 1 2 10-3 9-15z" fill="#fff" />
        <path d="M22 44l-9 9 6-1 6-8z" fill="#fff" />
        <path d="M48 13l-3 4 4 3" stroke="#ff6c37" strokeWidth="1.200" fill="none" />
      </Tile>
    ),
  },
  {
    running: true,
    icon: (
      <Tile id="terminal" from="#d9e6ee" to="#857f78">
        <rect x="2.500" y="2.500" width="59" height="59" rx="12.500" fill="#0a0a0a" />
        <rect x="7" y="7.500" width="50" height="49" rx="8" fill="#252525" />
        <path d="M12 12l7 4.500-7 4.500M21.500 24h9" stroke="#fff" strokeWidth="2" fill="none" />
      </Tile>
    ),
  },
  {
    running: true,
    icon: (
      <Tile id="telegram" from="#35a6e4" to="#2b93dd">
        <path d="M12 32L49 17q3-1 2 2l-5 28q-1 3-3 1L30 38l-1 7-5-9z" fill="#fff" />
        <path d="M44 22L27 37l1 8" stroke="#2f9ce0" strokeWidth="2.200" fill="none" />
      </Tile>
    ),
  },
  {
    running: true,
    icon: (
      <Tile id="cursor" from="#000000" to="#000000">
        <path d="M32 10L12 21h20z" fill="#747474" />
        <path d="M32 10l20 11H32z" fill="#4a4a4a" />
        <path d="M12 21l12 14-12 8z" fill="#c4c4c4" />
        <path d="M12 43l12-8 8 19z" fill="#6a6a6a" />
        <path d="M12 21h20l0 12-8 2z" fill="#9c9c9c" />
        <path d="M24 35l8-2v21z" fill="#444444" />
        <path d="M52 21v22L40 36z" fill="#6c6c6c" />
        <path d="M52 43L32 54l8-18z" fill="#dcdcdc" />
        <path d="M12 21h40L32 54V32z" fill="#f7f7f7" />
        <path d="M12 21l20 11v7z" fill="#cfcfcf" />
      </Tile>
    ),
  },
];

function DockApp({ icon, running }: { icon: ReactNode; running?: boolean }) {
  return (
    <div className="flex w-[82px] flex-col items-center pt-[13px]">
      {icon}
      {running && <div className="mr-[2px] mt-[9px] size-2 rounded-full bg-[#a894c4]" />}
    </div>
  );
}

const DockDivider = () => (
  <div className="flex w-[36px] justify-center pt-[12px]">
    <div className="h-[72px] w-[2px] bg-white/25" />
  </div>
);

function Dock() {
  return (
    <footer className="relative ml-[173px] mt-[2px] flex h-[100px] w-[2215px] rounded-[32px] border-2 border-white/20 pl-[3px] shadow-[0_0_70px_rgba(0,0,0,0.27)] [background-image:linear-gradient(90deg,#1c142c_0%,#1f1535_25%,#221447_55%,#2d1450_62%,#46155f_68%,#48145f_74%,#3a1657_82%,#241444_92%,#211342_100%)] [background-origin:border-box]">
      {DOCK_MAIN.map((app, i) => (
        <DockApp key={i} {...app} />
      ))}
      <DockDivider />
      {DOCK_RECENT.map((app, i) => (
        <DockApp key={i} {...app} />
      ))}
      <DockDivider />
      <div className="flex w-[82px] justify-center pt-[8px]">
        <svg className="h-[73px] w-[56px]" viewBox="0 0 56 73">
          <defs>
            <linearGradient id="bin" x1="0" y1="0" x2="1" y2="0">
              <stop offset="0" stopColor="#8b8f92" />
              <stop offset="0.300" stopColor="#6d7174" />
              <stop offset="0.600" stopColor="#8e9295" />
              <stop offset="1" stopColor="#5e6265" />
            </linearGradient>
          </defs>
          <path d="M4 8l6-6 6 3 5-4 7 4 6-4 6 5 8-2 4 6-3 8H6z" fill="#d9d9dc" />
          <path d="M12 4l5 8 4-9M32 3l-3 9M40 6l-3 8 8-6" stroke="#6b4b42" strokeWidth="1.600" fill="none" />
          <path d="M19 8l5-1 1 4-6 1z" fill="#3cb5cf" />
          <path d="M0 10q28 12 56 0l-7 56q-2 6-21 6T7 66z" fill="url(#bin)" />
          <path d="M0 10q28 12 56 0" stroke="#c0c4c6" strokeWidth="1.500" fill="none" />
        </svg>
      </div>
    </footer>
  );
}

export default function App() {
  return (
    <div className="flex h-[1596px] w-[2560px] flex-col overflow-hidden bg-[linear-gradient(90deg,#08021a_0%,#0d0326_12%,#120638_45%,#3a0a5c_66%,#4d0c6a_72%,#240550_84%,#12042e_100%)] font-['Inter',sans-serif]">
      <MenuBar />
      <div className="relative flex h-[1439px] shrink-0 flex-col overflow-hidden rounded-[20px] border-t border-black">
        <TabStrip />
        <Toolbar />
        <Page />
        <div className="pointer-events-none absolute inset-0 rounded-[20px] shadow-[inset_0_0_0_2px_rgba(255,255,255,0.28)]" />
      </div>
      <Dock />
    </div>
  );
}
